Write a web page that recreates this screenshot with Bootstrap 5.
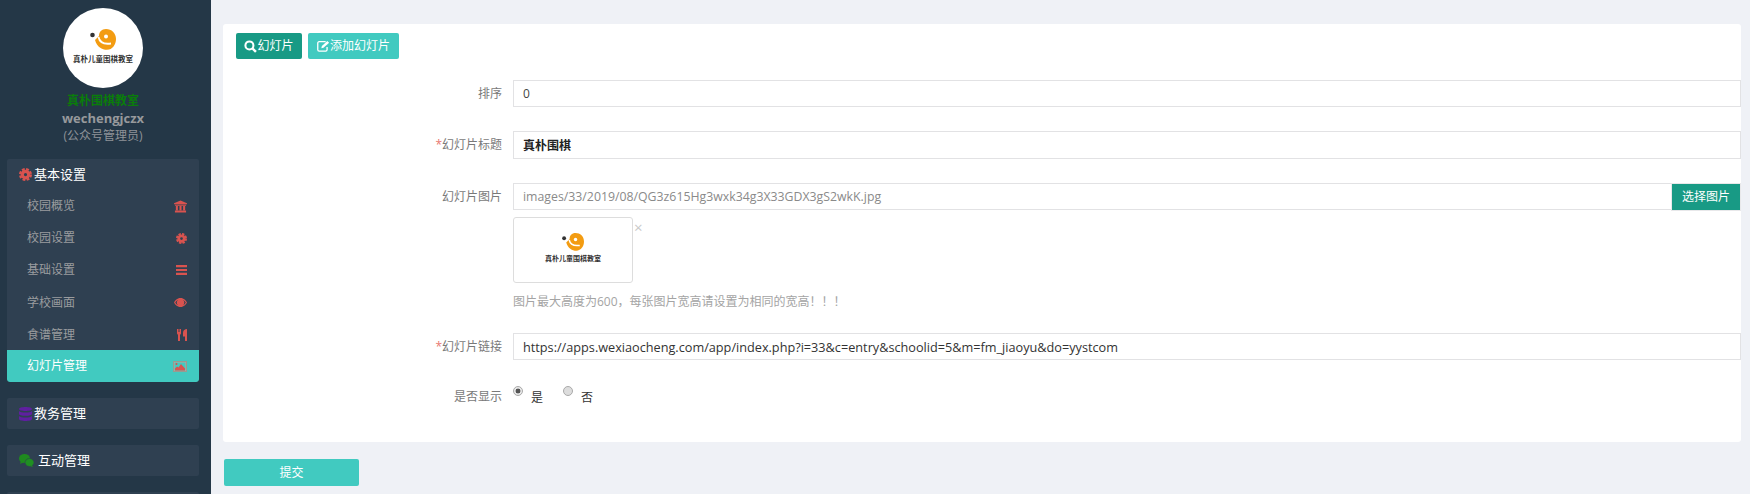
<!doctype html>
<html lang="zh-CN">
<head>
<meta charset="utf-8">
<title>幻灯片管理</title>
<link rel="stylesheet" href="https://cdn.jsdelivr.net/npm/bootstrap@5.3.0/dist/css/bootstrap.min.css">
<style>
html,body{height:494px;overflow:hidden}
body{background:#eff1f6;font-family:"Open Sans","Noto Sans CJK SC",sans-serif;font-size:12px;color:#797979}
.shell{height:494px}
.side{width:211px;flex:none;background:#243747;padding:8px 12px 0 7px;height:494px;overflow:hidden}
.brand{text-align:center;height:151px}
.avatar{width:80px;height:80px;border-radius:50%;background:#fff;margin:0 auto 4px;padding-top:21px}
.avatar svg,.thumb-box svg{display:block;margin:0 auto}
.logo-text{font-size:7.5px;line-height:10px;color:#333;font-weight:700;white-space:nowrap;margin-top:4px}
.school{color:#0a7d0a;font-size:12px;font-weight:700;line-height:17px}
.uname{color:#97999c;font-size:13px;font-weight:700;line-height:18px}
.role{color:#8f9398;font-size:12px;line-height:18px}
.group{background:#2f4051;border-radius:2px;margin-bottom:16px;overflow:hidden}
.ghead{height:31px;padding:0 12px;color:#fff;font-size:13px;gap:2px}
.ghead.gap-w{gap:4px}
.mitem{height:32.2px;background:transparent;border:0;padding:0 12px 0 20px;color:#9a9c9f;font-size:12px;border-radius:0}
.mitem.active{background:#41cac0;color:#fff;border-radius:0 0 3px 3px}
.mitem svg{fill:#d9534f;flex:none}
.main{flex:1;min-width:0;padding:24px 9px 0 12px}
.panel-box{background:#fff;border-radius:3px;height:418px;padding:9px 0 0 13px}
.btn-a,.btn-b,.btn-c{font-size:12px;color:#fff;border:0;border-radius:2px;line-height:1;font-weight:400}
.btn-a{background:#189a85;height:26px;width:66px;padding:0}
.btn-b{background:#41cac0;height:26px;width:91px;padding:0}
.btn-a:hover,.btn-c:hover{background:#189a85;color:#fff}
.btn-b:hover,.btn-d:hover{background:#41cac0;color:#fff}
.toolbar{gap:6px}
.frow{display:flex}
.flabel{width:277px;flex:none;text-align:right;padding-right:11px;line-height:27px;margin:0;font-size:12px;color:#797979}
.req{color:#e8776f}
.fbody{flex:1;min-width:0}
.form-control.finput{height:27px;border:1px solid #e2e2e4;border-radius:0;font-size:12px;padding:0 9px;color:#444;box-shadow:none}
.form-control.finput.dim{color:#8a8a8a;font-size:12.3px}
.form-control.finput.strong{color:#222;font-weight:600;height:28px}
.form-control.finput.url{font-size:12.7px;color:#333}
.input-group .btn.btn-c{background:#189a85;width:70px;height:28px;border-radius:0;border:1px solid #e8e8ea;margin-left:0;padding:0}
.thumb-row{margin-top:6px;gap:1px}
.thumb-box{width:120px;height:66px;border:1px solid #ddd;border-radius:3px;background:#fff;padding-top:15px}
.thumb-box .logo-text{font-size:7px;margin-top:3px}
.thumb-x{color:#c9c9c9;font-size:15px;line-height:14px;margin-top:3px}
.hint{color:#a4a4a4;font-size:12px;margin-top:10px;line-height:18px}
.r1{margin-top:21px}
.r2{margin-top:24px}
.r3{margin-top:24px}
.r4{margin-top:22px}
.r5{margin-top:26px}
.r5 .flabel{line-height:22px}
.radios{display:flex}
.ropt{display:flex;margin-right:20px;color:#333;font-size:12px;gap:8px}
.ropt .form-check-input{width:10px;height:10px;margin:0;background:#ddd;border:1px solid #aaa;box-shadow:none;flex:none}
.ropt .form-check-input:checked{background-color:#e8e8e8;border-color:#aaa;background-image:radial-gradient(circle,#555 0 2.2px,transparent 2.7px)}
.ropt span{padding-top:5px;line-height:14px}
.btn-d{display:block;background:#41cac0;width:135px;height:27px;color:#fff;border:0;border-radius:2px;font-size:12px;margin:17px 0 0 1px;padding:0}
</style>
</head>
<body>
<svg width="0" height="0" class="position-absolute">
  <defs>
    <g id="logo-mark">
      <circle cx="2.500" cy="6" r="2.300" fill="#333"/>
      <path d="M5 11C7 18 12 20.800 17 20.800C22.500 20.800 26 15.500 26 10C26 4 21.500 0 16 0C11.500 0 9 3 9 7z" fill="#f39c12"/>
      <path d="M8.500 8C9.500 13 14 15.500 21 14.500" fill="none" stroke="#fff" stroke-width="1.800"/>
      <circle cx="16" cy="7.500" r="2" fill="#fff"/>
    </g>
    <g id="cog">
      <circle cx="12" cy="12" r="6" fill="none" stroke="#d9534f" stroke-width="6"/>
      <circle cx="12" cy="12" r="10" fill="none" stroke="#d9534f" stroke-width="4" stroke-dasharray="5.200 2.650"/>
    </g>
  </defs>
</svg>
<div class="d-flex shell">
  <aside class="side">
    <div class="brand">
      <div class="avatar">
        <svg width="26" height="21" viewBox="0 0 26 21"><use href="#logo-mark"/></svg>
        <div class="logo-text">真朴儿童围棋教室</div>
      </div>
      <div class="school">真朴围棋教室</div>
      <div class="uname">wechengjczx</div>
      <div class="role">(公众号管理员)</div>
    </div>

    <div class="group">
      <div class="ghead d-flex align-items-center">
        <svg width="13" height="13" viewBox="0 0 24 24"><use href="#cog"/></svg>
        <span>基本设置</span>
      </div>
      <div class="list-group">
        <a class="list-group-item mitem d-flex align-items-center justify-content-between" href="#"><span>校园概览</span><svg width="13" height="13" viewBox="0 0 14 13"><path d="M7 0l7 3v1H0V3zM1 4.500h12v1.200H1zM2 6h2.200v4.500H2zM5.900 6h2.200v4.500H5.900zM9.800 6H12v4.500H9.800zM1 10.800h12V13H1z"/></svg></a>
        <a class="list-group-item mitem d-flex align-items-center justify-content-between" href="#"><span>校园设置</span><svg width="11" height="11" viewBox="0 0 24 24"><use href="#cog"/></svg></a>
        <a class="list-group-item mitem d-flex align-items-center justify-content-between" href="#"><span>基础设置</span><svg width="11" height="10" viewBox="0 0 11 10"><path d="M0 0h11v2.200H0zM0 3.900h11v2.200H0zM0 7.800h11V10H0z"/></svg></a>
        <a class="list-group-item mitem d-flex align-items-center justify-content-between" href="#"><span>学校画面</span><svg width="13" height="9" viewBox="0 0 13 9"><path fill-rule="evenodd" d="M6.500 0C10 0 12 2.500 13 4.500 12 6.500 10 9 6.500 9S1 6.500 0 4.500C1 2.500 3 0 6.500 0zM1.300 4.500c.8 1.300 1.700 2.200 2.800 2.800a4 4 0 010-5.600C3 2.300 2.100 3.200 1.300 4.500zM9 1.700a4 4 0 010 5.600c1.100-.6 2-1.500 2.800-2.800C11 3.200 10.100 2.300 9 1.700z"/></svg></a>
        <a class="list-group-item mitem d-flex align-items-center justify-content-between" href="#"><span>食谱管理</span><svg width="10" height="12" viewBox="0 0 10 12"><path d="M0 0h1v3h.5V0h1v3H3V0h1v4.500L3 6v6H1V6L0 4.500zM6 4C6 1 8 0 10 0v12H8V7.500H6z"/></svg></a>
        <a class="list-group-item mitem active d-flex align-items-center justify-content-between" href="#"><span>幻灯片管理</span><svg width="14" height="11" viewBox="0 0 14 11"><rect x=".5" y=".5" width="13" height="10" fill="#b9a79c" stroke="#9a9a90"/><rect x="1.500" y="1.500" width="11" height="8" fill="#41cac0"/><path d="M2 9.500V7.500l2-2 1.500 1L8 3l4 4.500v2z"/><circle cx="3.500" cy="3" r="1"/></svg></a>
      </div>
    </div>

    <div class="group">
      <div class="ghead d-flex align-items-center">
        <svg width="13" height="14" viewBox="0 0 13 14"><path fill="#5f1fa0" d="M6.500 0C10 0 13 .8 13 2s-3 2-6.500 2S0 3.200 0 2 3 0 6.500 0zM0 4c1 1 3.500 1.500 6.500 1.500S12 5 13 4v3c0 1-3 1.800-6.500 1.800S0 8 0 7zM0 9c1 1 3.500 1.500 6.500 1.500S12 10 13 9v3c0 1.200-3 2-6.500 2S0 13.200 0 12z"/></svg>
        <span>教务管理</span>
      </div>
    </div>
    <div class="group">
      <div class="ghead gap-w d-flex align-items-center">
        <svg width="15" height="13" viewBox="0 0 15 13"><ellipse cx="5.500" cy="4.500" rx="5.500" ry="4.500" fill="#1f8a1f"/><path fill="#1f8a1f" d="M2 7l-1 3 3-1.500z"/><ellipse cx="10.500" cy="8.500" rx="4.500" ry="4" fill="#1f8f22" stroke="#2f4051" stroke-width=".6"/><path fill="#1f8f22" d="M12.500 11l1.500 2-3-1z"/></svg>
        <span>互动管理</span>
      </div>
    </div>
    <div class="group">
      <div class="ghead d-flex align-items-center"><span>&nbsp;</span></div>
    </div>
  </aside>

  <main class="main">
    <form class="panel-box">
      <div class="d-flex toolbar">
        <button type="button" class="btn btn-a d-flex align-items-center justify-content-center"><svg width="13" height="13" viewBox="0 0 12 12" fill="none" stroke="#fff"><circle cx="5" cy="5" r="3.700" stroke-width="1.900"/><path d="M8 8l3 3" stroke-width="2.300"/></svg><span>幻灯片</span></button>
        <button type="button" class="btn btn-b d-flex align-items-center justify-content-center"><svg width="13" height="12" viewBox="0 0 12 11" fill="none" stroke="#fff" stroke-width="1.200"><path d="M8 1.500H2A1.400 1.400 0 00.700 3v6A1.400 1.400 0 002 10.300h6A1.400 1.400 0 009.300 9V6.500"/><path d="M4 7.500l.5-2L9.500.8 11.200 2.500 6 7z" fill="#fff" stroke="none"/></svg><span>添加幻灯片</span></button>
      </div>

      <div class="frow r1">
        <label class="flabel">排序</label>
        <div class="fbody"><input class="form-control finput" value="0"></div>
      </div>
      <div class="frow r2">
        <label class="flabel"><span class="req">*</span>幻灯片标题</label>
        <div class="fbody"><input class="form-control finput strong" value="真朴围棋"></div>
      </div>
      <div class="frow r3">
        <label class="flabel">幻灯片图片</label>
        <div class="fbody">
          <div class="input-group flex-nowrap">
            <input class="form-control finput dim" value="images/33/2019/08/QG3z615Hg3wxk34g3X33GDX3gS2wkK.jpg">
            <button type="button" class="btn btn-c">选择图片</button>
          </div>
          <div class="d-flex thumb-row">
            <div class="thumb-box">
              <svg width="22" height="18" viewBox="0 0 26 21"><use href="#logo-mark"/></svg>
              <div class="logo-text text-center">真朴儿童围棋教室</div>
            </div>
            <span class="thumb-x">×</span>
          </div>
          <div class="hint">图片最大高度为600，每张图片宽高请设置为相同的宽高！！！</div>
        </div>
      </div>
      <div class="frow r4">
        <label class="flabel"><span class="req">*</span>幻灯片链接</label>
        <div class="fbody"><input class="form-control finput url" value="https://apps.wexiaocheng.com/app/index.php?i=33&amp;c=entry&amp;schoolid=5&amp;m=fm_jiaoyu&amp;do=yystcom"></div>
      </div>
      <div class="frow r5">
        <label class="flabel">是否显示</label>
        <div class="radios">
          <label class="ropt"><input class="form-check-input" type="radio" name="show" checked><span>是</span></label>
          <label class="ropt"><input class="form-check-input" type="radio" name="show"><span>否</span></label>
        </div>
      </div>
    </form>
    <button type="button" class="btn btn-d">提交</button>
  </main>
</div>
<script src="https://cdn.jsdelivr.net/npm/bootstrap@5.3.0/dist/js/bootstrap.bundle.min.js"></script>
</body>
</html>
